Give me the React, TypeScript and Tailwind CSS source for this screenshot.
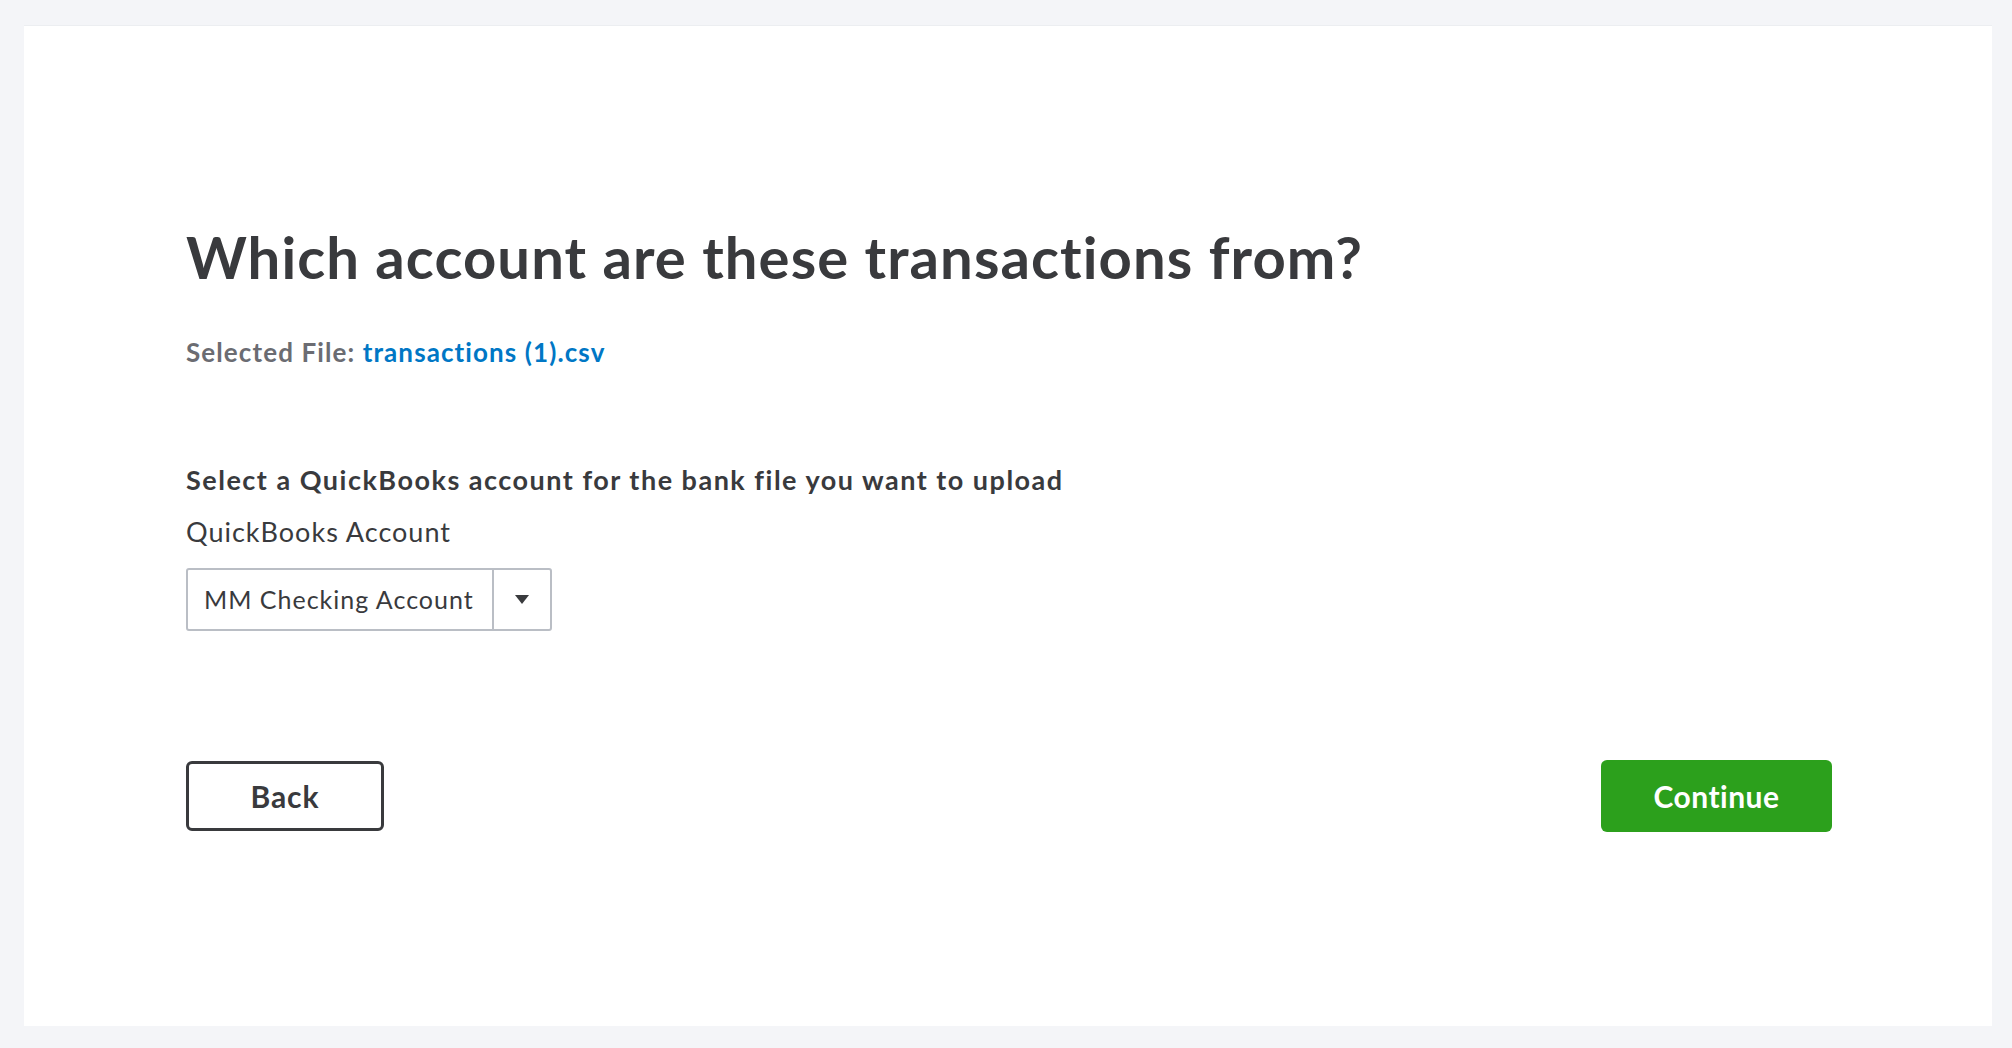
export default function App() {
  return (
    <div
      className="flex h-[1048px] w-full bg-[#f4f5f8] pb-[22px] pl-[24px] pr-[20px] pt-[25px] text-[#393a3d]"
      style={{ fontFamily: 'Lato, "Noto Sans", sans-serif' }}
    >
      <div className="flex flex-1 flex-col border-t border-[#eceef1] bg-white pl-[162px] pr-[160px] pt-[196px]">
        <h1 className="text-[58px] font-bold leading-[70px] tracking-[1.1px]">
          Which account are these transactions from?
        </h1>

        <p className="mt-[45px] text-[26px] font-bold leading-[30px] tracking-[1.1px] text-[#6b6c72]">
          Selected File: <span className="text-[#0077c5]">transactions (1).csv</span>
        </p>

        <p className="mt-[97px] text-[27px] font-bold leading-[32px] tracking-[1.5px]">
          Select a QuickBooks account for the bank file you want to upload
        </p>

        <label className="mt-[20px] text-[27px] font-normal leading-[32px] tracking-[1px]">
          QuickBooks Account
        </label>

        <div className="mt-[20px] flex h-[63px] w-[366px] items-stretch rounded-[3px] border-2 border-[#babec5]">
          <div className="flex flex-1 items-center pl-[16px] text-[25px] leading-none tracking-[1px]">
            MM Checking Account
          </div>
          <div className="flex w-[58px] items-center justify-center border-l-2 border-[#babec5]">
            <svg width="14" height="9" viewBox="0 0 14 9">
              <path d="M0 0h14L7 9z" fill="#393a3d" />
            </svg>
          </div>
        </div>

        <div className="mt-[129px] flex items-center justify-between">
          <button className="h-[70px] w-[198px] rounded-[6px] border-[3px] border-[#393a3d] bg-white text-[30px] font-bold tracking-[1px]">
            Back
          </button>
          <button className="h-[72px] w-[231px] rounded-[6px] bg-[#2ca01c] text-[30px] font-bold tracking-[0.5px] text-white">
            Continue
          </button>
        </div>
      </div>
    </div>
  )
}
